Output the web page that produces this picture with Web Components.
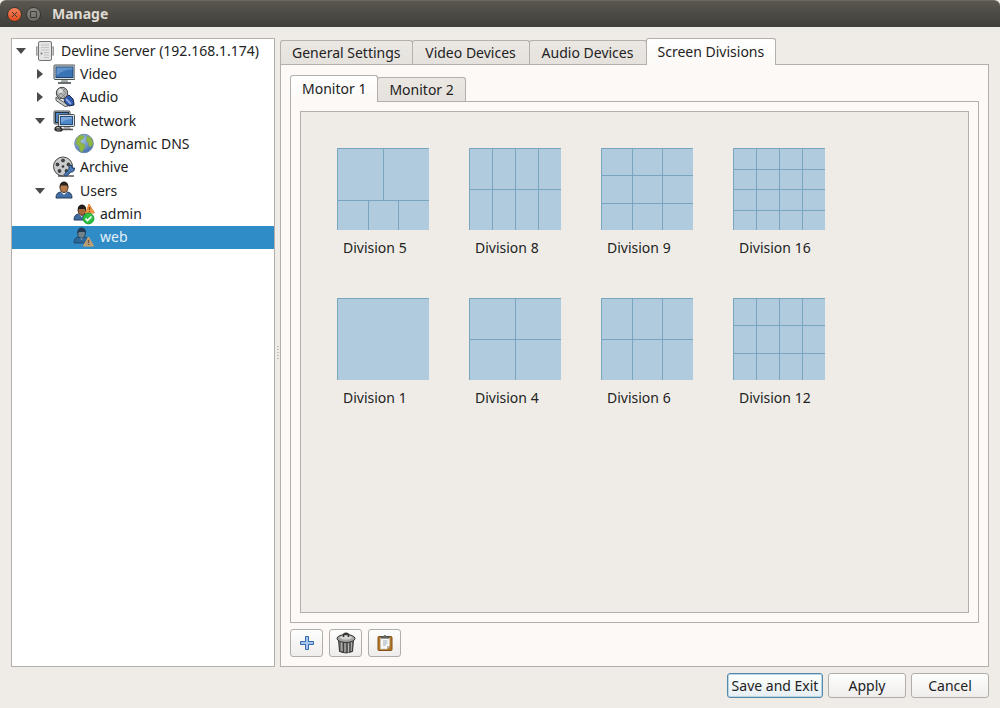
<!DOCTYPE html>
<html lang="en">
<head>
<meta charset="utf-8">
<meta name="viewport" content="width=device-width, initial-scale=1">
<title>Manage</title>
<style>
  body {
    margin: 0;
    background: #efebe7;
    color: #222;
    font: 14px/20px "Noto Sans", "Open Sans", sans-serif;
    --line: #b3afaa;
    --panel: #fcf9f6;
    --window: #efece7;
  }
</style>
</head>
<body>
<manage-window></manage-window>

<script>
const ICONS = {
  server: `<rect x="2.5" y="7" width="17" height="8" fill="#c9c9c9" stroke="#9b9b9b"/><rect x="4.500" y="1.500" width="13" height="19" rx="1.500" fill="#e4e4e4" stroke="#747474"/><path d="M7 5h8M7 7.500h8M7 10h8M10 12.500h5M10 15h5M10 17.500h5" stroke="#c3c3c3"/><circle cx="7.500" cy="13.500" r="1" fill="#777"/>`,
  video: `<rect x="1" y="2" width="21" height="14.500" rx="1" fill="#d8dcdc" stroke="#4b5355"/><rect x="3" y="4" width="17" height="10.500" fill="#3b74b6" stroke="#20446f"/><path d="M3.500 4.500h16v2C13 6 7 9 3.500 13z" fill="#73a3d5" opacity=".7"/><path d="M8.500 17h6l1 2.500h-8z" fill="#a7acac"/><path d="M5 20h13" stroke="#596164" stroke-width="1.800"/>`,
  audio: `<path d="M11 12l5-3 4 4q1 3 1 6l-5 1q-5-2-5-8z" fill="#2f58b0" stroke="#1c2744"/><path d="M13 13l5 5" stroke="#8eabe0" stroke-width="1.800"/><path d="M3 11l9 6 3 3-3 .5-9-6z" fill="#c9cdcd" stroke="#555"/><circle cx="9" cy="7" r="5.700" fill="#b4b6b7" stroke="#444"/><path d="M5 4l7 7M8 2l5 5M4 8l4 4M5 10l7-7M8 12l5-5" stroke="#707474" stroke-width=".7"/><ellipse cx="7.500" cy="5" rx="2.500" ry="2" fill="#f4f4f4" opacity=".8"/>`,
  network: `<rect x="1" y="1" width="16" height="13" rx="1" fill="#cbd1d3" stroke="#454f55"/><rect x="2.500" y="2.500" width="13" height="10" fill="#4f85c3" stroke="#234"/><rect x="5.500" y="4.500" width="16" height="12" rx="1" fill="#d9dddd" stroke="#454f55"/><rect x="7.500" y="6.500" width="12" height="8" fill="#4e88c9" stroke="#234f82"/><path d="M8 7h11v2q-7 0-11 4z" fill="#91b7df" opacity=".7"/><path d="M11 17h6l1 2h-8z" fill="#a9adad"/><path d="M9 19.500h11" stroke="#555" stroke-width="1.500"/><path d="M2 18q3-3 6 0t-2 3q-4 0-4-2h7" fill="none" stroke="#2e2e2e" stroke-width="1.500"/>`,
  globe: `<defs><radialGradient id="sea" cx=".35" cy=".3" r=".8"><stop stop-color="#a9c9ea"/><stop offset="1" stop-color="#3b68a8"/></radialGradient></defs><circle cx="11" cy="10.500" r="9.300" fill="url(#sea)" stroke="#6f8cae"/><path d="M4 5q4-4 7-2l-1 3-3 2 1 2 3 1 1 3-3 5-2-1-1-5-3-2zM14 3l4 2 2 5-2 4-2-1-1-4-2-1 1-2z" fill="#91b843" stroke="#7f9f42" stroke-width=".5"/>`,
  archive: `<path d="M5 20h16" stroke="#555" stroke-width="1.500"/><circle cx="10" cy="10.500" r="9.500" fill="#c9cbcb" stroke="#414141"/><g fill="#3d4143" stroke="#eee" stroke-width=".7"><circle cx="10" cy="4.500" r="2.400"/><circle cx="4.500" cy="8.500" r="2.400"/><circle cx="15.500" cy="8.500" r="2.400"/><circle cx="6.500" cy="15" r="2.400"/><circle cx="13.500" cy="15" r="2.400"/></g><circle cx="10" cy="10.500" r="1.300" fill="#333"/><path d="M11 18.500l5-5q-1-3.500 2.500-4.500l.5 3h2.500q0 4.500-4 4l-4.500 4.500z" fill="#4d7dbb" stroke="#203c69"/>`,
  user: `<path d="M3 18q0-6 5-6h6q5 0 5 6z" fill="#426fa5" stroke="#263c5b"/><path d="M8 12l3 3 3-3z" fill="#e9edf0"/><ellipse cx="11" cy="7.500" rx="4" ry="5" fill="#b77b49" stroke="#493425"/><path d="M6.800 8V5q1-3.500 4.200-3.500T15.200 5v3l-1-2.500H7.800z" fill="#29231f"/>`,
  admin: `<path d="M1 17q0-6 5-6h5q5 0 5 6z" fill="#3f6da1" stroke="#263c5b"/><path d="M6 11l2.500 3 3-3z" fill="#fff"/><ellipse cx="9" cy="7.500" rx="3.800" ry="4.800" fill="#a9693a" stroke="#3b2a20"/><path d="M4.800 8V5q1-3.500 4.200-3.500T13 5v3l-1-2H6z" fill="#211e1d"/><path d="M16 1l5.500 9h-9z" fill="#f19743" stroke="#ea8a3c" stroke-linejoin="round"/><path d="M16.500 4v3M16.500 8v1" stroke="#8f4212" stroke-width="1.300"/><circle cx="15.500" cy="15.500" r="5.400" fill="#2fc140" stroke="#1f9a33"/><path d="M12.500 15.500l2 2 4-4" fill="none" stroke="#fff" stroke-width="1.700"/>`,
  web: `<path d="M1 17q0-6 5-6h5q5 0 5 6z" fill="#2c679c" stroke="#24486b"/><path d="M6 11l2.500 3 3-3z" fill="#9dbdd2"/><ellipse cx="8.500" cy="7.500" rx="3.800" ry="4.800" fill="#72828c" stroke="#26455e"/><path d="M4.500 8V5q1-3.500 4-3.500T13 5v3l-1-2H6z" fill="#213c53"/><path d="M15.500 11l5 9h-10z" fill="#b69b79" stroke="#d0a469" stroke-linejoin="round"/><path d="M15.500 14v3M15.500 18v1" stroke="#6b563c" stroke-width="1.300"/>`,
  add: `<path d="M9.500 4.500h3v5h5v3h-5v5h-3v-5h-5v-3h5z" fill="#a4c8ef" stroke="#3569a8" stroke-linejoin="round"/>`,
  trash: `<path d="M3.500 7h15l-1 12.500q-6.500 3-13 0z" fill="#747572" stroke="#2e2e2e"/><path d="M6.500 10l.5 9M10 11v9.500M13.500 11v9.500M16.500 10L16 19" stroke="#b5b6b2"/><path d="M8.500 10v10M12 11v10M15 10v10" stroke="#3e3f3d"/><ellipse cx="11" cy="6.500" rx="9" ry="4" fill="#a3a4a1" stroke="#343532"/><ellipse cx="11" cy="5.500" rx="6" ry="2" fill="#d5d6d3"/><path d="M8.500 5V2.300q2.500-2 5 0V5" fill="none" stroke="#343532" stroke-width="1.500"/>`,
  clipboard: `<rect x="4" y="4.500" width="14" height="14" rx="1" fill="#b8782a" stroke="#805018"/><path d="M6.500 6h9v8L13 17H6.500z" fill="#f8f8f5" stroke="#c9c7bd" stroke-width=".7"/><path d="M9 9h4.500M9 11h4.500M9 13h3" stroke="#9caec0"/><path d="M15.500 14H13v3z" fill="#bbb"/><path d="M7 6V4.500h2.500q1.500-2 3 0H15V6z" fill="#777a76" stroke="#4d504c"/>`
};

function define(name, html, setup) {
  customElements.define(name, class extends HTMLElement {
    constructor() {
      super();
      this.attachShadow({ mode: "open" }).innerHTML = html;
    }
    connectedCallback() { if (setup) setup(this, this.shadowRoot); }
  });
}

define("ui-icon", `
  <style>:host{display:block;flex:none;width:22px;height:22px}svg{display:block;width:100%;height:100%}</style>
  <svg viewBox="0 0 22 22" aria-hidden="true"></svg>`,
  (el, root) => { root.querySelector("svg").innerHTML = ICONS[el.getAttribute("name")]; });

define("title-bar", `
  <style>
    :host{display:flex;align-items:center;gap:4px;height:27px;padding:0 7px;box-sizing:border-box;
      background:linear-gradient(#59574f,#3f3e39);border-radius:6px 6px 0 0;border-top:1px solid #6b6961}
    button{display:grid;place-items:center;width:15px;height:15px;padding:0;border:1px solid #33322e;border-radius:50%;background:linear-gradient(#8b8981,#6c6a63)}
    button.close{background:linear-gradient(#f5835c,#df4a1c)}
    svg{width:9px;height:9px;fill:none;stroke:#3b3a35}
    h1{margin:0 0 0 7px;font-size:14px;line-height:20px;font-weight:700;color:#dfdbd2}
  </style>
  <button class="close" aria-label="Close"><svg viewBox="0 0 9 9"><path d="M2 2l5 5M7 2l-5 5"/></svg></button>
  <button aria-label="Maximize"><svg viewBox="0 0 9 9"><path d="M1.500 1.500h6v6h-6z"/></svg></button>
  <h1><slot></slot></h1>`);

define("tree-view", `
  <style>
    :host{display:block;box-sizing:border-box;background:#fff;border:1px solid var(--line)}
    .rows{display:grid;grid-auto-rows:1fr;height:210px}
  </style>
  <div class="rows" role="tree"><slot></slot></div>`);

define("tree-item", `
  <style>
    :host{display:flex;align-items:center;white-space:nowrap}
    :host([level="1"]){padding-left:19px}
    :host([level="2"]){padding-left:39px}
    :host([selected]){background:#308cc6;color:#e4f1fa}
    .arrow{flex:none;display:grid;place-items:center;width:18px;margin-right:4px}
    .arrow svg{display:none;width:10px;height:10px;fill:#4b4b4b}
    :host([state]) svg{display:block}
    :host([state="closed"]) svg{transform:rotate(-90deg)}
    span{padding-left:5px}
  </style>
  <div class="arrow"><svg viewBox="0 0 10 10"><path d="M0 2h10L5 8z"/></svg></div>
  <ui-icon></ui-icon><span><slot></slot></span>`,
  (el, root) => {
    const icon = document.createElement("ui-icon");
    icon.setAttribute("name", el.getAttribute("icon"));
    root.querySelector("ui-icon").replaceWith(icon);
    el.setAttribute("role", "treeitem");
    el.setAttribute("aria-selected", el.hasAttribute("selected"));
  });

define("tab-button", `
  <style>
    :host{display:block;margin-left:-1px;position:relative}
    :host(:first-child){margin-left:0}
    button{display:block;box-sizing:border-box;height:24px;min-width:var(--tab-min,0);padding:0 11px;border:1px solid var(--line);border-bottom:0;
      border-radius:3px 3px 0 0;background:linear-gradient(#ebe8e4,#e5e1dd);color:inherit;font:inherit;line-height:24px;white-space:nowrap}
    :host([selected]){z-index:1;margin-bottom:-1px}
    :host([selected]) button{height:27px;line-height:26px;background:linear-gradient(#fff,var(--panel))}
  </style>
  <button role="tab"><slot></slot></button>`,
  (el, root) => root.querySelector("button").setAttribute("aria-selected", el.hasAttribute("selected")));

define("tab-panel", `
  <style>
    :host{display:flex;flex-direction:column;min-width:0}
    .tabs{display:flex;align-items:flex-end}
    .body{flex:1;display:flex;flex-direction:column;box-sizing:border-box;padding:var(--inset-top,9px) 9px 9px;border:1px solid var(--line);background:var(--panel)}
  </style>
  <div class="tabs" role="tablist"><slot name="tab"></slot></div>
  <div class="body" role="tabpanel"><slot></slot></div>`);

/* layout lists one entry per row, "columns" or "columns@height" in px. */
define("division-card", `
  <style>
    :host{display:block}
    svg{display:block;width:92px;height:82px;background:#b0cbdd}
    path{fill:none;stroke:#78a6c0;shape-rendering:crispEdges}
    figure{margin:0}
    figcaption{margin-top:8px;padding-left:6px;white-space:nowrap}
  </style>
  <figure><svg viewBox="0 0 92 82" aria-hidden="true"><path/></svg><figcaption><slot></slot></figcaption></figure>`,
  (el, root) => {
    const rows = el.getAttribute("layout").split(" ").map(r => r.split("@").map(Number));
    let y = 0, d = "";
    for (const [cols, height = 82 / rows.length] of rows) {
      const top = Math.round(y), bottom = Math.round(y + height);
      d += `M0 ${top + .5}H92`;
      for (let c = 0; c < cols; c++) d += `M${Math.round(c * 92 / cols) + .5} ${top}V${bottom}`;
      y += height;
    }
    root.querySelector("path").setAttribute("d", d);
  });

define("push-button", `
  <style>
    :host{display:block}
    button{display:grid;place-items:center;box-sizing:border-box;width:100%;height:25px;padding:0;border:1px solid #b1ada8;border-radius:3px;
      background:linear-gradient(#fefefe,#efedeb);color:inherit;font:inherit;line-height:20px;white-space:nowrap}
    :host([tool]) button{height:28px}
    :host([primary]) button{border-color:#5488aa;box-shadow:inset 0 0 0 1px #b9d5e6;background:linear-gradient(#fff,#e6eff4)}
  </style>
  <button><slot></slot></button>`,
  (el, root) => { if (el.title) root.querySelector("button").setAttribute("aria-label", el.title); });

define("manage-window", `
  <style>
    :host{display:flex;flex-direction:column;min-height:100vh;background:var(--window)}
    title-bar{flex:none}
    main{flex:1;display:grid;grid-template-columns:264px 5px minmax(0,1fr);padding:11px 11px 6px}
    .grip{align-self:center;justify-self:center;width:2px;height:14px;background:repeating-linear-gradient(#c4c0bb 0 1px,transparent 1px 3px)}
    .settings{--tab-min:118px;--inset-top:10px}
    .monitor{flex:1;--tab-min:0;--inset-top:9px}
    .canvas{flex:1;display:grid;grid-template-columns:repeat(4,92px);align-content:start;gap:40px;padding:36px;
      border:1px solid var(--line);background:var(--window)}
    .tools{display:flex;gap:6px;padding-top:6px}
    .tools push-button{width:33px}
    footer{display:flex;justify-content:flex-end;gap:5px;padding:0 11px 10px}
    footer push-button{width:78px}
    footer push-button[primary]{width:96px}
  </style>
  <title-bar>Manage</title-bar>
  <main>
    <tree-view>
      <tree-item level="0" icon="server" state="open">Devline Server (192.168.1.174)</tree-item>
      <tree-item level="1" icon="video" state="closed">Video</tree-item>
      <tree-item level="1" icon="audio" state="closed">Audio</tree-item>
      <tree-item level="1" icon="network" state="open">Network</tree-item>
      <tree-item level="2" icon="globe">Dynamic DNS</tree-item>
      <tree-item level="1" icon="archive">Archive</tree-item>
      <tree-item level="1" icon="user" state="open">Users</tree-item>
      <tree-item level="2" icon="admin">admin</tree-item>
      <tree-item level="2" icon="web" selected>web</tree-item>
    </tree-view>
    <div class="grip"></div>
    <tab-panel class="settings">
      <tab-button slot="tab">General Settings</tab-button>
      <tab-button slot="tab">Video Devices</tab-button>
      <tab-button slot="tab">Audio Devices</tab-button>
      <tab-button slot="tab" selected>Screen Divisions</tab-button>
      <tab-panel class="monitor">
        <tab-button slot="tab" selected>Monitor 1</tab-button>
        <tab-button slot="tab">Monitor 2</tab-button>
        <div class="canvas">
          <division-card layout="2@52 3@30">Division 5</division-card>
          <division-card layout="4 4">Division 8</division-card>
          <division-card layout="3 3 3">Division 9</division-card>
          <division-card layout="4 4 4 4">Division 16</division-card>
          <division-card layout="1">Division 1</division-card>
          <division-card layout="2 2">Division 4</division-card>
          <division-card layout="3 3">Division 6</division-card>
          <division-card layout="4 4 4">Division 12</division-card>
        </div>
      </tab-panel>
      <div class="tools">
        <push-button tool title="Add"><ui-icon name="add"></ui-icon></push-button>
        <push-button tool title="Delete"><ui-icon name="trash"></ui-icon></push-button>
        <push-button tool title="Paste"><ui-icon name="clipboard"></ui-icon></push-button>
      </div>
    </tab-panel>
  </main>
  <footer>
    <push-button primary>Save and Exit</push-button>
    <push-button>Apply</push-button>
    <push-button>Cancel</push-button>
  </footer>`);
</script>
</body>
</html>
